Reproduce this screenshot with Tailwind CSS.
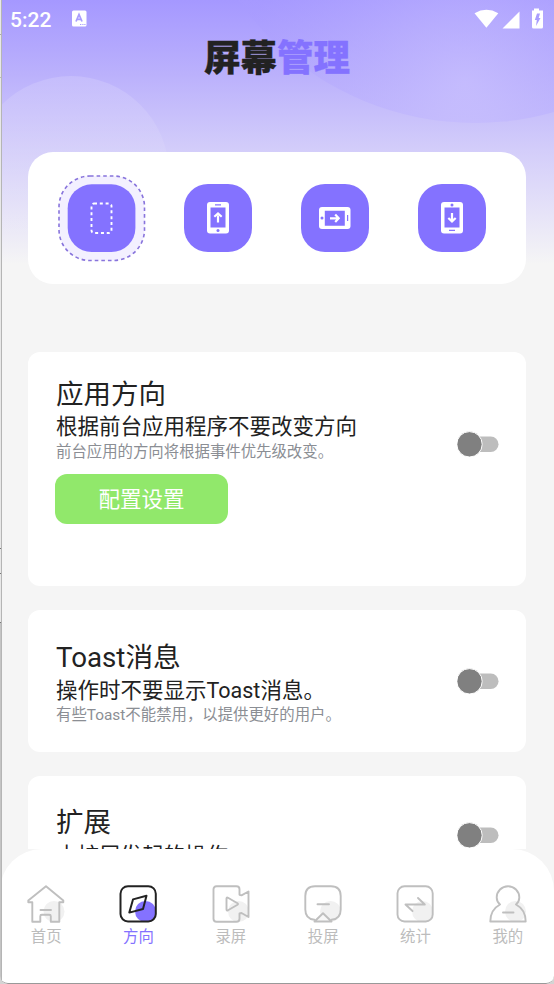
<!DOCTYPE html>
<html lang="zh-CN">
<head>
<meta charset="utf-8">
<title>屏幕管理</title>
<script src="https://cdn.jsdelivr.net/npm/@tailwindcss/browser@4"></script>
</head>
<body class="bg-[#d4d4d4]">
<div class="relative w-[554px] h-[984px] overflow-hidden rounded-b-[8px] bg-[#f5f5f5] font-['Roboto','Noto_Sans_CJK_SC',sans-serif] text-[#222]">
  <!-- header backdrop -->
  <svg class="absolute inset-0" width="554" height="300" viewBox="0 0 554 300">
    <defs>
      <linearGradient id="bg" x1="0" y1="0" x2="0" y2="1">
        <stop offset="0" stop-color="#a598ff"/><stop offset=".25" stop-color="#bbb1fc"/><stop offset=".5" stop-color="#d3cdfa"/><stop offset=".72" stop-color="#e7e4f8"/><stop offset=".88" stop-color="#f5f5f5"/><stop offset="1" stop-color="#f5f5f5"/>
      </linearGradient>
      <linearGradient id="c1" x1="0" y1="0" x2="0" y2="1"><stop offset="0" stop-color="#fff" stop-opacity=".15"/><stop offset=".4" stop-color="#fff" stop-opacity=".07"/><stop offset="1" stop-color="#fff" stop-opacity="0"/></linearGradient>
      <radialGradient id="c2" cx="465" cy="82" r="220" gradientUnits="userSpaceOnUse"><stop offset="0" stop-color="#c8bfff" stop-opacity=".65"/><stop offset=".3" stop-color="#beb4fe" stop-opacity=".6"/><stop offset="1" stop-color="#a89bff" stop-opacity=".3"/></radialGradient>
    </defs>
    <rect width="554" height="300" fill="url(#bg)"/>
    <circle cx="71" cy="174" r="98" fill="url(#c1)"/>
    <circle cx="475" cy="-167" r="290" fill="url(#c2)"/>
  </svg>

  <div class="relative flex h-full flex-col">
    <!-- status bar -->
    <div class="flex h-[36px] shrink-0 items-center pl-[10px] pr-[10px] pt-[3px] text-white">
      <span class="text-[21px] font-medium leading-6">5:22</span>
      <svg class="ml-[21px] -mt-[2px]" width="15" height="17" viewBox="0 0 15 17"><rect y=".5" width="14.5" height="16" rx="1.5" fill="#fff"/><path d="M4 11.5 7 4.5l3 7M5 9.4h4" fill="none" stroke="#a99dfe" stroke-width="1.8"/><path d="M8 14.500h1.300m1 0h1.200m.8 0h1.200" stroke="#a99dfe" stroke-width="1.2"/></svg>
      <svg class="ml-auto -mt-[3px]" width="70" height="22" viewBox="0 0 70 22"><path d="M.5 6.200Q12.500-.5 24.300 6.200L12.400 20.800Z" fill="#fff"/><path d="M45.500 4.500v17H28.500Z" fill="#fff"/><path d="M60 1.500h5v2h4v16.500q0 1.500-1.500 1.500h-8Q58 21.500 58 20V3.500h2Z" fill="#fff"/><path d="M63 6.500h3l-1.300 4.500h1.800l-4.500 8 .8-6h-2Z" fill="#a99dfe"/></svg>
    </div>
    <h1 class="flex h-[42px] shrink-0 justify-center text-[36.500px] font-black leading-[40px] [-webkit-text-stroke:0.300px_currentColor] font-['Noto_Sans_CJK_SC',sans-serif]"><span>屏幕</span><span class="text-[#8472ff]">管理</span></h1>

    <!-- orientation picker -->
    <div class="mx-[28px] mt-[74px] flex h-[132px] shrink-0 items-center rounded-[25px] bg-white pl-[30px]">
      <svg class="relative top-[1px]" width="88" height="88" viewBox="0 0 88 88"><rect x="1" y="1" width="85.500" height="84.500" rx="31" fill="#f3f0ff" stroke="#8874dc" stroke-width="1.600" stroke-dasharray="3.600 3"/><rect x="9.700" y="9.300" width="67.700" height="67.700" rx="24" fill="#8472ff"/><rect x="33.500" y="28.500" width="20" height="29.500" rx="2.500" fill="none" stroke="#fff" stroke-width="1.900" stroke-dasharray="3 2.800"/></svg>
      <div class="ml-[38px] flex size-[68px] items-center justify-center rounded-[24px] bg-[#8472ff]">
        <svg width="22" height="32" viewBox="0 0 22 32"><rect width="22" height="31.500" rx="3" fill="#fff"/><g fill="#8472ff"><path d="M3.500 5.500h15v20h-15ZM8 2.300h6v1.200H8Z"/><circle cx="11" cy="28.500" r="1.500"/></g><path d="M11 20.500v-7M7.300 14.800 11 11.500l3.700 3.300" fill="none" stroke="#fff" stroke-width="2.200"/></svg>
      </div>
      <div class="ml-[49px] flex size-[68px] items-center justify-center rounded-[24px] bg-[#8472ff]">
        <svg width="32" height="22" viewBox="0 0 32 22"><rect width="31.500" height="22" rx="3" fill="#fff"/><g fill="#8472ff"><path d="M5.800 3.800h20v15h-20ZM28 8h1.200v6H28Z"/><circle cx="3" cy="11" r="1.500"/></g><path d="M11 11.300h8M16.200 7.500l3.500 3.800-3.500 3.700" fill="none" stroke="#fff" stroke-width="2.200"/></svg>
      </div>
      <div class="ml-[49px] flex size-[68px] items-center justify-center rounded-[24px] bg-[#8472ff]">
        <svg width="22" height="32" viewBox="0 0 22 32"><rect width="22" height="31.500" rx="3" fill="#fff"/><g fill="#8472ff"><path d="M3.500 5.500h15v20h-15ZM8 27.800h6V29H8Z"/><circle cx="11" cy="3" r="1.500"/></g><path d="M11 11v8M7.300 16 11 19.400l3.700-3.400" fill="none" stroke="#fff" stroke-width="2.200"/></svg>
      </div>
    </div>

    <!-- settings -->
    <div class="mx-[28px] mt-[68px] flex h-[234px] shrink-0 rounded-[12px] bg-white pl-[27px] pt-[24px]">
      <div class="flex flex-col items-start">
        <h2 class="pl-[1px] text-[27.500px] leading-[38px]">应用方向</h2>
        <p class="pl-[1px] text-[21.500px] leading-[26px]">根据前台应用程序不要改变方向</p>
        <p class="pl-[1px] text-[15.400px] leading-[24px] text-[#8b8e94]">前台应用的方向将根据事件优先级改变。</p>
        <button class="mt-[10px] h-[50px] w-[173px] rounded-[12px] bg-[#91e86b] pt-[2px] text-[21.500px] leading-[40px] text-white">配置设置</button>
      </div>
      <svg class="ml-auto mr-[26px] mt-[54px]" width="43" height="28" viewBox="0 0 43 28"><rect x="10" y="6.500" width="31.500" height="15.500" rx="7.750" fill="#bdbdbd"/><circle cx="12.500" cy="14.300" r="12.700" fill="#808080" stroke="#fff" stroke-width="1"/></svg>
    </div>
    <div class="mx-[28px] mt-[24px] flex h-[142px] shrink-0 rounded-[12px] bg-white pl-[28px] pt-[29px]">
      <div>
        <h2 class="text-[27.700px] leading-[38px]">Toast消息</h2>
        <p class="text-[21.500px] leading-[27px]">操作时不要显示Toast消息。</p>
        <p class="text-[15.400px] leading-[23px] text-[#8b8e94]">有些Toast不能禁用，以提供更好的用户。</p>
      </div>
      <svg class="ml-auto mr-[26px] mt-[28px]" width="43" height="28" viewBox="0 0 43 28"><rect x="10" y="6.500" width="31.500" height="15.500" rx="7.750" fill="#bdbdbd"/><circle cx="12.500" cy="14.300" r="12.700" fill="#808080" stroke="#fff" stroke-width="1"/></svg>
    </div>
    <div class="mx-[28px] mt-[24px] flex h-[73px] shrink-0 overflow-hidden rounded-t-[12px] bg-white pl-[28px] pt-[28px]">
      <div>
        <h2 class="text-[27.500px] leading-[38px]">扩展</h2>
        <p class="text-[21.500px] leading-[28px]">由扩展发起的操作</p>
      </div>
      <svg class="ml-auto mr-[26px] mt-[17px] shrink-0" width="43" height="28" viewBox="0 0 43 28"><rect x="10" y="6.500" width="31.500" height="15.500" rx="7.750" fill="#bdbdbd"/><circle cx="12.500" cy="14.300" r="12.700" fill="#808080" stroke="#fff" stroke-width="1"/></svg>
    </div>

    <!-- bottom navigation -->
    <nav class="grid flex-1 grid-cols-6 rounded-t-[42px] rounded-b-[8px] border-b border-[#999] bg-white pt-[36px] text-[15.400px] leading-[22px] text-[#bcbcbc]">
      <a class="flex flex-col items-center gap-[3px]">
        <svg width="38" height="38" viewBox="0 0 38 38" fill="none" stroke="#bfbfbf" stroke-width="1.900" stroke-linejoin="round" stroke-linecap="round"><circle cx="27" cy="26.500" r="10.500" fill="#f1f1f1" stroke="none"/><path d="M19 1.300 1.300 15.500v1.800h4v19.500h8v-5.500q0-1.500 1.500-1.500h7.500q1.500 0 1.500 1.500v5.500h8.500V17.300h4v-1.800ZM13.500 25h10.500"/></svg>
        <span>首页</span>
      </a>
      <a class="flex flex-col items-center gap-[3px] text-[#8472ff]">
        <svg width="38" height="38" viewBox="0 0 38 38"><defs><clipPath id="k"><rect x="1" y="1" width="35.500" height="35.500" rx="7.500"/></clipPath></defs><circle cx="26.500" cy="26.500" r="10.500" fill="#8472ff" clip-path="url(#k)"/><rect x="1.500" y="1.200" width="35.300" height="35.300" rx="7.500" fill="none" stroke="#222" stroke-width="2"/><path d="M27.500 10.800 24 24 10.300 27.600 14 14.400Z" fill="none" stroke="#222" stroke-width="2" stroke-linejoin="round"/></svg>
        <span>方向</span>
      </a>
      <a class="flex flex-col items-center gap-[3px]">
        <svg width="38" height="38" viewBox="0 0 38 38" fill="none" stroke="#bfbfbf" stroke-width="1.900" stroke-linejoin="round" stroke-linecap="round"><circle cx="26.500" cy="26.500" r="10.500" fill="#f1f1f1" stroke="none"/><path d="M4.500 1.300h20q3 0 3 3v5.500l2 .500 7-3.800v25.500l-7-4-2 .500v5.300q0 3-3 3h-20q-3 0-3-3V4.300q0-3 3-3ZM14.500 13.500v11q0 1.500 1.500.800l9.500-5.500q1-.800 0-1.500L16 12.800q-1.500-.800-1.500.700Z"/></svg>
        <span>录屏</span>
      </a>
      <a class="flex flex-col items-center gap-[3px]">
        <svg width="38" height="38" viewBox="0 0 38 38" fill="none" stroke="#bfbfbf" stroke-width="1.900" stroke-linejoin="round" stroke-linecap="round"><circle cx="26.500" cy="26.500" r="10.500" fill="#f1f1f1" stroke="none"/><path d="M10.500 34.800Q1.300 34 1.300 24.500V11Q1.300 1.300 11 1.300h16q9.700 0 9.700 9.700v13.500q0 9.500-9.200 10.300M13.500 19.200h11.500"/><path d="M19 28.200 27.500 36.500h-17Z" fill="#f7f7f7"/></svg>
        <span>投屏</span>
      </a>
      <a class="flex flex-col items-center gap-[3px]">
        <svg width="38" height="38" viewBox="0 0 38 38" fill="none" stroke="#bfbfbf" stroke-width="1.900" stroke-linejoin="round" stroke-linecap="round"><circle cx="26.500" cy="26.500" r="10.500" fill="#f1f1f1" stroke="none"/><rect x="1.500" y="1.300" width="35.200" height="35.200" rx="7"/><path d="M22 13l6.800 6.500H9.500l7 6.500"/></svg>
        <span>统计</span>
      </a>
      <a class="flex flex-col items-center gap-[3px]">
        <svg width="38" height="38" viewBox="0 0 38 38" fill="none" stroke="#bfbfbf" stroke-width="1.900" stroke-linejoin="round" stroke-linecap="round"><circle cx="26.500" cy="26.500" r="10.500" fill="#f1f1f1" stroke="none"/><path d="M11 19.500C4.500 23 1.300 28.500 1.300 36.500h35.400C36.700 28.500 33.500 23 27 19.500 29.300 17.500 30.300 15 30.300 12.500A11.300 11.300 0 0 0 7.700 12.500C7.700 15 8.700 17.500 11 19.500ZM14 27.500h10.500"/></svg>
        <span>我的</span>
      </a>
    </nav>
  </div>

  <!-- window edge -->
  <div class="absolute left-0 top-0 flex h-full w-[2px] flex-col border-r border-[#b5b5b5] bg-[#e8e8e8]">
    <div class="h-[35px] border-b border-[#aaa]"></div>
    <div class="h-[43px] border-b border-[#bbb]"></div>
    <div class="h-[471px] border-b border-[#777]"></div>
    <div class="h-[25px] border-b border-[#777]"></div>
    <div class="h-[49px] border-b border-[#777]"></div>
    <div class="flex-1 bg-[#c4c4c4]"></div>
  </div>
</div>
</body>
</html>
